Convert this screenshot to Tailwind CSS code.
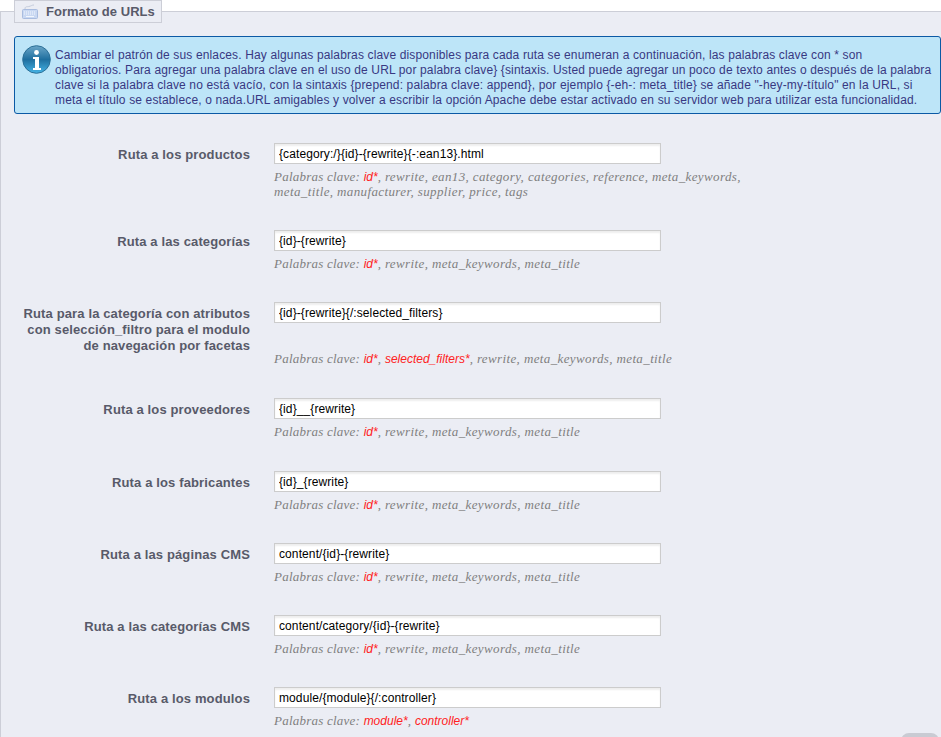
<!DOCTYPE html>
<html lang="es">
<head>
  <meta charset="UTF-8" />
  <title>Formato de URLs</title>
  <script src="https://cdn.jsdelivr.net/npm/@tailwindcss/browser@4"></script>
</head>
<body class="bg-white font-['Liberation_Sans',Arial,sans-serif] overflow-hidden">
  <div class="relative h-[737px] w-[941px] overflow-hidden">
    <!-- panel -->
    <div class="mt-[11px] h-[726px] border-t border-l border-[#ccced7] bg-[#ebedf4] pl-[13px]">
      <!-- legend -->
      <div class="-mt-[12px] flex h-[23px] w-[148px] items-center border border-[#ccced7] bg-[#ebedf4] pl-[7px] text-[13px] font-bold text-[#585a69]">
        <svg class="mr-[8px] h-[16px] w-[16px]" viewBox="0 0 16 16">
          <path d="M3 5 C3 2 5 3 7 2.5 C9 2 10 1 12 1" fill="none" stroke="#c4cbdb" />
          <rect x="0.5" y="5.5" width="15" height="9" rx="1" fill="#c9d8f2" stroke="#a9bcdf" />
          <path d="M2 8h12M2 10h12" stroke="#f2f6fd" stroke-dasharray="1 1" />
          <path d="M4 12.5h8" stroke="#f2f6fd" />
        </svg>
        <span class="tracking-[0.03px]">Formato de URLs</span>
      </div>

      <!-- info box -->
      <div class="mt-[13px] flex h-[78px] w-[927px] rounded-[3px] border border-[#0b5aa5] bg-[#bde5f8] pl-[7px] pt-[8px]">
        <svg class="mr-[4px] h-[29px] w-[29px] shrink-0" viewBox="0 0 29 29">
          <defs>
            <linearGradient id="infoFill" x1="0" y1="0" x2="0" y2="1">
              <stop offset="0" stop-color="#6ba6c8" />
              <stop offset="0.5" stop-color="#1f6f9f" />
              <stop offset="1" stop-color="#45b4e6" />
            </linearGradient>
          </defs>
          <circle cx="14.5" cy="14.5" r="13.8" fill="url(#infoFill)" stroke="#2b6f97" />
          <circle cx="14.5" cy="7.5" r="2.4" fill="#ffffff" />
          <path d="M11 12h6v11h2v2h-8v-2h2v-9h-2z" fill="#ffffff" />
        </svg>
        <p class="mt-[3px] whitespace-nowrap text-[12px] leading-[15px] tracking-[0.14px] text-[#383882]">Cambiar el patrón de sus enlaces. Hay algunas palabras clave disponibles para cada ruta se enumeran a continuación, las palabras clave con * son<br />obligatorios. Para agregar una palabra clave en el uso de URL por palabra clave} {sintaxis. Usted puede agregar un poco de texto antes o después de la palabra<br />clave si la palabra clave no está vacío, con la sintaxis {prepend: palabra clave: append}, por ejemplo {-eh-: meta_title} se añade "-hey-my-título" en la URL, si<br />meta el título se establece, o nada.URL amigables y volver a escribir la opción Apache debe estar activado en su servidor web para utilizar esta funcionalidad.</p>
      </div>

      <!-- rows -->
      <div class="mt-[29px] flex flex-col">
        <div class="mb-[31px] grid grid-cols-[236px_387px] gap-x-[24px] gap-y-[5px]">
          <label class="pt-[4px] text-right text-[13px] font-bold leading-[16px] tracking-[0.13px] text-[#585a69]">Ruta a los productos</label>
          <input value="{category:/}{id}-{rewrite}{-:ean13}.html" class="h-[21px] w-[387px] border border-[#cccccc] bg-white px-[4px] text-[12px] tracking-[0.1px] text-black shadow-[inset_0_2px_2px_#eeeeee]" />
          <p class="col-start-2 w-[480px] font-['Liberation_Serif',serif] text-[13px] italic leading-[15px] tracking-[0.38px] text-[#7f7f7f]"><span class="tracking-[0.22px]">Palabras clave:</span> <span class="font-['Liberation_Sans',sans-serif] text-[12px] leading-[12px] tracking-normal text-[#ff2222]">id*</span>, rewrite, ean13, category, categories, reference, meta_keywords, meta_title, manufacturer, supplier, price, tags</p>
        </div>

        <div class="mb-[31px] grid grid-cols-[236px_387px] gap-x-[24px] gap-y-[5px]">
          <label class="pt-[4px] text-right text-[13px] font-bold leading-[16px] tracking-[0.13px] text-[#585a69]">Ruta a las categorías</label>
          <input value="{id}-{rewrite}" class="h-[21px] w-[387px] border border-[#cccccc] bg-white px-[4px] text-[12px] tracking-[0.1px] text-black shadow-[inset_0_2px_2px_#eeeeee]" />
          <p class="col-start-2 w-[480px] font-['Liberation_Serif',serif] text-[13px] italic leading-[15px] tracking-[0.38px] text-[#7f7f7f]"><span class="tracking-[0.22px]">Palabras clave:</span> <span class="font-['Liberation_Sans',sans-serif] text-[12px] leading-[12px] tracking-normal text-[#ff2222]">id*</span>, rewrite, meta_keywords, meta_title</p>
        </div>

        <div class="mb-[32px] grid grid-cols-[236px_387px] gap-x-[24px] gap-y-[5px]">
          <label class="-mb-[8px] pt-[4px] text-right text-[13px] font-bold leading-[16px] tracking-[0.13px] text-[#585a69]">Ruta para la categoría con atributos con selección_filtro para el modulo de navegación por facetas</label>
          <input value="{id}-{rewrite}{/:selected_filters}" class="h-[21px] w-[387px] border border-[#cccccc] bg-white px-[4px] text-[12px] tracking-[0.1px] text-black shadow-[inset_0_2px_2px_#eeeeee]" />
          <p class="col-start-2 w-[480px] font-['Liberation_Serif',serif] text-[13px] italic leading-[15px] tracking-[0.38px] text-[#7f7f7f]"><span class="tracking-[0.22px]">Palabras clave:</span> <span class="font-['Liberation_Sans',sans-serif] text-[12px] leading-[12px] tracking-normal text-[#ff2222]">id*</span>, <span class="font-['Liberation_Sans',sans-serif] text-[12px] leading-[12px] tracking-normal text-[#ff2222]">selected_filters*</span>, rewrite, meta_keywords, meta_title</p>
        </div>

        <div class="mb-[32px] grid grid-cols-[236px_387px] gap-x-[24px] gap-y-[5px]">
          <label class="pt-[4px] text-right text-[13px] font-bold leading-[16px] tracking-[0.13px] text-[#585a69]">Ruta a los proveedores</label>
          <input value="{id}__{rewrite}" class="h-[21px] w-[387px] border border-[#cccccc] bg-white px-[4px] text-[12px] tracking-[0.1px] text-black shadow-[inset_0_2px_2px_#eeeeee]" />
          <p class="col-start-2 w-[480px] font-['Liberation_Serif',serif] text-[13px] italic leading-[15px] tracking-[0.38px] text-[#7f7f7f]"><span class="tracking-[0.22px]">Palabras clave:</span> <span class="font-['Liberation_Sans',sans-serif] text-[12px] leading-[12px] tracking-normal text-[#ff2222]">id*</span>, rewrite, meta_keywords, meta_title</p>
        </div>

        <div class="mb-[31px] grid grid-cols-[236px_387px] gap-x-[24px] gap-y-[5px]">
          <label class="pt-[4px] text-right text-[13px] font-bold leading-[16px] tracking-[0.13px] text-[#585a69]">Ruta a los fabricantes</label>
          <input value="{id}_{rewrite}" class="h-[21px] w-[387px] border border-[#cccccc] bg-white px-[4px] text-[12px] tracking-[0.1px] text-black shadow-[inset_0_2px_2px_#eeeeee]" />
          <p class="col-start-2 w-[480px] font-['Liberation_Serif',serif] text-[13px] italic leading-[15px] tracking-[0.38px] text-[#7f7f7f]"><span class="tracking-[0.22px]">Palabras clave:</span> <span class="font-['Liberation_Sans',sans-serif] text-[12px] leading-[12px] tracking-normal text-[#ff2222]">id*</span>, rewrite, meta_keywords, meta_title</p>
        </div>

        <div class="mb-[31px] grid grid-cols-[236px_387px] gap-x-[24px] gap-y-[5px]">
          <label class="pt-[4px] text-right text-[13px] font-bold leading-[16px] tracking-[0.13px] text-[#585a69]">Ruta a las páginas CMS</label>
          <input value="content/{id}-{rewrite}" class="h-[21px] w-[387px] border border-[#cccccc] bg-white px-[4px] text-[12px] tracking-[0.1px] text-black shadow-[inset_0_2px_2px_#eeeeee]" />
          <p class="col-start-2 w-[480px] font-['Liberation_Serif',serif] text-[13px] italic leading-[15px] tracking-[0.38px] text-[#7f7f7f]"><span class="tracking-[0.22px]">Palabras clave:</span> <span class="font-['Liberation_Sans',sans-serif] text-[12px] leading-[12px] tracking-normal text-[#ff2222]">id*</span>, rewrite, meta_keywords, meta_title</p>
        </div>

        <div class="mb-[31px] grid grid-cols-[236px_387px] gap-x-[24px] gap-y-[5px]">
          <label class="pt-[4px] text-right text-[13px] font-bold leading-[16px] tracking-[0.13px] text-[#585a69]">Ruta a las categorías CMS</label>
          <input value="content/category/{id}-{rewrite}" class="h-[21px] w-[387px] border border-[#cccccc] bg-white px-[4px] text-[12px] tracking-[0.1px] text-black shadow-[inset_0_2px_2px_#eeeeee]" />
          <p class="col-start-2 w-[480px] font-['Liberation_Serif',serif] text-[13px] italic leading-[15px] tracking-[0.38px] text-[#7f7f7f]"><span class="tracking-[0.22px]">Palabras clave:</span> <span class="font-['Liberation_Sans',sans-serif] text-[12px] leading-[12px] tracking-normal text-[#ff2222]">id*</span>, rewrite, meta_keywords, meta_title</p>
        </div>

        <div class="grid grid-cols-[236px_387px] gap-x-[24px] gap-y-[5px]">
          <label class="pt-[4px] text-right text-[13px] font-bold leading-[16px] tracking-[0.13px] text-[#585a69]">Ruta a los modulos</label>
          <input value="module/{module}{/:controller}" class="h-[21px] w-[387px] border border-[#cccccc] bg-white px-[4px] text-[12px] tracking-[0.1px] text-black shadow-[inset_0_2px_2px_#eeeeee]" />
          <p class="col-start-2 w-[480px] font-['Liberation_Serif',serif] text-[13px] italic leading-[15px] tracking-[0.38px] text-[#7f7f7f]"><span class="tracking-[0.22px]">Palabras clave:</span> <span class="font-['Liberation_Sans',sans-serif] text-[12px] leading-[12px] tracking-normal text-[#ff2222]">module*</span>, <span class="font-['Liberation_Sans',sans-serif] text-[12px] leading-[12px] tracking-normal text-[#ff2222]">controller*</span></p>
        </div>
      </div>
    </div>

    <!-- corner overlay -->
    <div class="absolute bottom-[-4px] right-[2px] h-[8px] w-[38px] rounded-t-[8px] bg-[#c9cbd3]"></div>
  </div>
</body>
</html>
